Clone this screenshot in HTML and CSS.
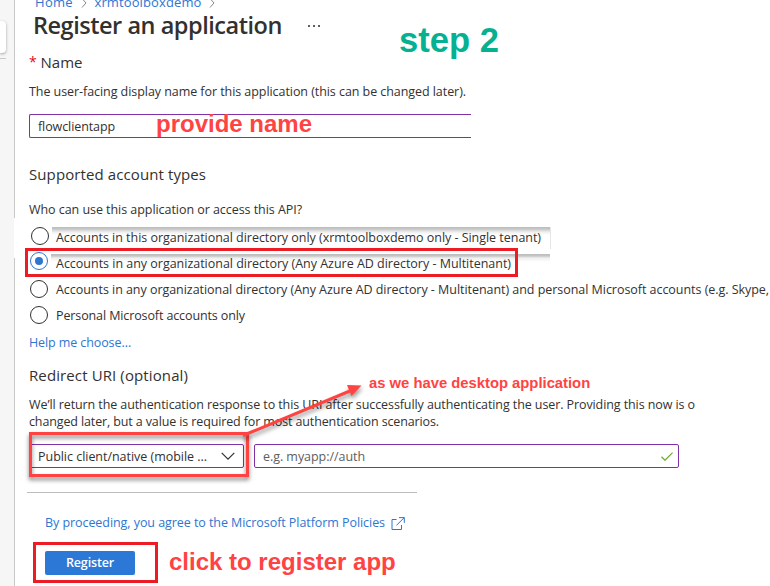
FILE: index.html
```
<!DOCTYPE html>
<html lang="en">
<head>
<meta charset="utf-8">
<title>Register an application</title>
<link rel="stylesheet" href="styles.css">
</head>
<body>
<div class="app">
  <aside class="rail"><div class="rail-card"></div><div class="rail-line"></div></aside>
  <main class="blade">
    <nav class="crumbs">
      <a class="crumb-home">Home</a>
      <svg class="chev" viewBox="0 0 6 10"><path d="M1 .5 5 5 1 9.5"/></svg>
      <a class="crumb-dir">xrmtoolboxdemo</a>
      <svg class="chev" viewBox="0 0 6 10"><path d="M1 .5 5 5 1 9.5"/></svg>
    </nav>
    <header class="head">
      <h1>Register an application</h1>
      <svg class="more" viewBox="0 0 12 2"><path d="M0 0h2v2H0zM5 0h2v2H5zM10 0h2v2h-2z"/></svg>
    </header>
    <label class="label name-label"><span class="req">*</span>Name</label>
    <p class="text desc">The user-facing display name for this application (this can be changed later).</p>
    <div class="name-input">flowclientapp</div>

    <h2 class="label types">Supported account types</h2>
    <p class="text who">Who can use this application or access this API?</p>
    <div class="radios">
      <div class="radio shade-a"><i class="dot first"></i><span class="opt o1">Accounts in this organizational directory only (xrmtoolboxdemo only - Single tenant)</span></div>
      <div class="radio shade-b"><i class="dot on"></i><span class="opt o2">Accounts in any organizational directory (Any Azure AD directory - Multitenant)</span></div>
      <div class="radio"><i class="dot"></i><span class="opt o3">Accounts in any organizational directory (Any Azure AD directory - Multitenant) and personal Microsoft accounts (e.g. Skype,</span></div>
      <div class="radio"><i class="dot"></i><span class="opt o4">Personal Microsoft accounts only</span></div>
    </div>
    <a class="text help">Help me choose…</a>

    <h2 class="label redirect">Redirect URI (optional)</h2>
    <p class="para"><span class="l1">We’ll return the authentication response to this URI after successfully authenticating the user. Providing this now is o</span><br><span class="l2">changed later, but a value is required for most authentication scenarios.</span></p>
    <div class="uri-row">
      <div class="select"><span>Public client/native (mobile ...</span>
        <svg class="caret" viewBox="0 0 14 8"><path d="M.7.8 7 7.1 13.3.8"/></svg></div>
      <div class="uri-input"><span>e.g. myapp://auth</span>
        <svg class="tick" viewBox="0 0 12 9"><path d="M.5 4.8 4 8.2 11.6.6"/></svg></div>
    </div>
    <hr>
    <a class="policy"><span>By proceeding, you agree to the Microsoft Platform Policies</span>
      <svg class="ext" viewBox="0 0 14 13"><path d="M5.5 2.5H1v10h9.500V8M8 .6h5.300v5.300M13.200.7 5.500 8.300"/></svg></a>
    <button class="register">Register</button>
  </main>

  <div class="cover"></div>
  <div class="box box-radio"></div>
  <div class="box box-register"></div>
  <div class="box-select"></div>
  <svg class="arrow" viewBox="0 0 130 65"><path class="shaft" d="M4 55.500 112 10.500"/><path class="tip" d="M108 5 122.500 5.500 112.500 16z"/></svg>
  <div class="note step">step 2</div>
  <div class="note provide">provide name</div>
  <div class="note desktop">as we have desktop application</div>
  <div class="note click">click to register app</div>
</div>
</body>
</html>
```
FILE: styles.css
```
* { box-sizing: border-box; margin: 0; padding: 0; }
body { background: #fff; color: #323130; font: 12.5px/18px "Open Sans", "Noto Sans", sans-serif; overflow: hidden; }
svg { display: block; fill: none; }
a { color: #2d76d2; }

.app { position: relative; display: flex; width: 770px; height: 586px; overflow: hidden; }
.rail { width: 15px; flex: none; background: #f6f6f6; border-right: 1px solid #c8c8c8; padding-top: 21px; }
.rail-card { width: 6px; height: 32px; background: #fff; border-radius: 0 4px 4px 0; box-shadow: 0 1px 3px rgba(0,0,0,.35); }
.rail-line { width: 6px; height: 1px; margin-top: 5px; background: #c8c8c8; }

.blade { flex: none; width: 755px; padding-left: 14px; white-space: nowrap; }
.crumbs { display: flex; align-items: center; height: 18px; margin-top: -7px; padding-left: 6px; font-size: 13px; }
.crumb-home { width: 46px; letter-spacing: .3px; }
.crumb-dir { width: 109px; margin-left: 7.5px; letter-spacing: .115px; }
.chev { width: 6px; height: 10px; stroke: #8a8886; margin-top: 1px; }
.crumbs .chev:last-child { margin-left: 5px; }

.head { display: flex; height: 27px; padding-left: 4px; }
h1 { width: 275px; font-size: 23.5px; line-height: 28px; font-weight: 600; letter-spacing: -.47px; color: #323130; }
.more { width: 12px; height: 2px; margin-top: 14px; fill: #605e5c; }
.label { display: block; height: 20px; font-size: 15px; line-height: 20px; font-weight: 400; }
.text { display: block; }
.name-label { display: flex; margin-top: 14px; }
.req { width: 11.5px; color: #e00b1c; font-size: 14px; }
.desc { margin-top: 11px; letter-spacing: -.06px; }
.name-input { width: 442px; height: 24px; margin-top: 13px; padding-left: 8px; line-height: 23px; letter-spacing: -.09px; border: 1px solid #8230a8; border-right: 0; border-radius: 2px 0 0 2px; }
.types { margin-top: 26px; letter-spacing: .1px; }
.who { margin-top: 17px; letter-spacing: -.052px; }

.radios { margin-top: 5px; }
.radio { display: flex; align-items: center; height: 26px; position: relative; }
.dot { width: 18px; height: 18px; flex: none; margin-left: 1px; border: 1px solid #323130; border-radius: 50%; background: #fff; position: relative; }
.first { left: 1px; top: -1px; }
.on { top: -2px; border-color: #2d76d2; }
.on::after { content: ""; position: absolute; left: 4px; top: 4px; width: 8px; height: 8px; border-radius: 50%; background: #2d76d2; }
.opt { margin-left: 8px; padding-top: 2px; position: relative; }
.o1 { letter-spacing: -.031px; }
.o2 { letter-spacing: -.017px; }
.o3 { letter-spacing: -.041px; }
.o4 { letter-spacing: -.112px; }
.shade-a::before { content: ""; position: absolute; left: 23px; top: 3px; width: 498px; height: 22px; background: linear-gradient(#bcbcbc 0, #c6c6c6 2px, #efefef 5px, #fff 8px); border-right: 1px solid #e6e6e6; }
.shade-b::before { content: ""; position: absolute; left: 22px; top: 4px; width: 499px; height: 10px; background: linear-gradient(#bcbcbc 0, #c6c6c6 2px, #efefef 4px, #fff 8px); }
.help { margin-top: 6px; letter-spacing: -.1px; }
.redirect { margin-top: 13px; letter-spacing: .112px; }
.para { margin-top: 11px; line-height: 17px; }
.l1 { letter-spacing: -.092px; }
.l2 { letter-spacing: -.124px; }

.uri-row { display: flex; gap: 10px; margin-top: 14px; }
.select, .uri-input { display: flex; align-items: center; justify-content: space-between; height: 24px; border: 1px solid #8230a8; border-radius: 2px; letter-spacing: -.03px; background: #fff; }
.select span, .uri-input span { padding-top: 2px; }
.select { width: 215px; padding: 0 8px; }
.uri-input { width: 425px; padding: 0 5px 0 8px; color: #605e5c; letter-spacing: -.05px; }
.caret { width: 14px; height: 8px; stroke: #323130; stroke-width: 1.2; }
.tick { width: 12px; height: 9px; stroke: #6bb02c; stroke-width: 1.3; }
hr { width: 390px; height: 1px; margin: 24px 0 0 -2px; border: 0; background: #bdbdbd; }
.policy { display: flex; align-items: center; margin: 21px 0 0 16px; letter-spacing: -.062px; }
.ext { width: 14px; height: 13px; margin-left: 6px; stroke: #2d76d2; }
.register { display: block; width: 90px; height: 24px; margin: 19px 0 0 16px; padding-bottom: 1px; border: 0; border-radius: 2px; background: #2b78d6; color: #fff; font: 600 12.5px/22px "Open Sans", sans-serif; letter-spacing: -.15px; }

.cover { position: absolute; left: 14px; top: 218px; width: 1px; height: 40px; background: #fff; }
.box { position: absolute; border: 3px solid #ed1c24; }
.box-radio { left: 25px; top: 248px; width: 493px; height: 29px; }
.box-register { left: 33px; top: 542px; width: 125px; height: 41px; }
.box-select { position: absolute; left: 29px; top: 432px; width: 220px; height: 45px; border: 3px solid #ff4343; filter: drop-shadow(0 3px 2px rgba(0,0,0,.5)); }
.arrow { position: absolute; left: 239px; top: 380px; width: 130px; height: 65px; filter: drop-shadow(1px 3px 2px rgba(0,0,0,.4)); }
.shaft { stroke: #ff4343; stroke-width: 3; }
.tip { fill: #ff4343; }
.note { position: absolute; font-family: "Liberation Sans", sans-serif; font-weight: 700; color: #ff4343; white-space: nowrap; }
.step { left: 399px; top: 20px; font-size: 34.6px; line-height: 40px; color: #06b192; }
.provide { left: 156px; top: 109px; font-size: 24px; line-height: 30px; }
.desktop { left: 369px; top: 373px; font-size: 14.8px; line-height: 20px; }
.click { left: 169px; top: 547px; font-size: 24px; line-height: 30px; }
```
